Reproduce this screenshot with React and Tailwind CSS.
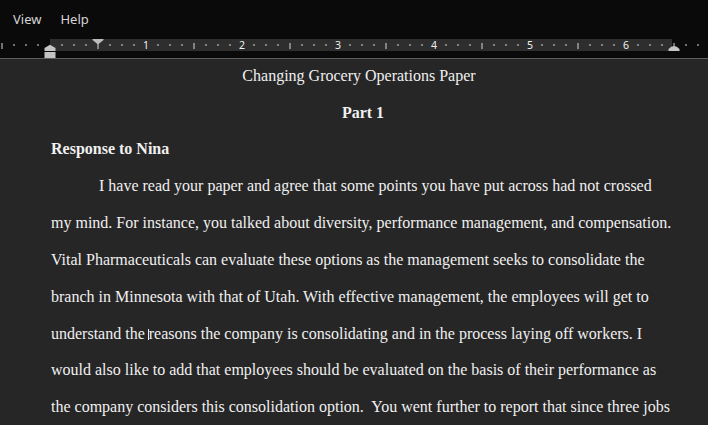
import React from 'react';

const lines = [
  'my mind. For instance, you talked about diversity, performance management, and compensation.',
  'Vital Pharmaceuticals can evaluate these options as the management seeks to consolidate the',
  'branch in Minnesota with that of Utah. With effective management, the employees will get to',
];

function Ruler() {
  const ticks = [];
  for (let k = -4; k <= 54; k++) {
    const x = 50 + k * 12;
    if (k === 0 || x > 706) continue;
    if (k % 8 === 0) {
      ticks.push(
        <text key={k} x={x} y={9.5} fill="#f0f0f0" fontSize="10.5" fontFamily="'Noto Sans', sans-serif" textAnchor="middle">
          {k / 8}
        </text>
      );
    } else if (Math.abs(k % 8) === 4) {
      ticks.push(<rect key={k} x={x - 0.5} y={4} width={1} height={6} fill="#d8d8d8" />);
    } else {
      ticks.push(<rect key={k} x={x - 0.5} y={5} width={1} height={2} fill="#d8d8d8" />);
    }
  }
  return (
    <svg width="708" height="19" viewBox="0 0 708 19" className="block">
      <rect x="0" y="0" width="708" height="19" fill="#0a0a0a" />
      <rect x="50" y="0" width="622" height="12" fill="#2e2e2e" />
      {ticks}
      {/* first line indent */}
      <path d="M92.5 -2 H103.5 V1 L98 5.5 L92.5 1 Z" fill="#bdbdbd" />
      {/* hanging indent + left indent */}
      <path d="M50 5.8 L44.5 9 V12 H55.5 V9 Z" fill="#c4c4c4" />
      <rect x="44.5" y="13" width="11" height="6" fill="#c4c4c4" />
      {/* right indent */}
      <path d="M668.5 12 V10 Q674 4 679.5 10 V12 Z" fill="#c4c4c4" />
    </svg>
  );
}

export default function App() {
  return (
    <div className="w-[708px] h-[425px] overflow-hidden bg-[#262626]">
      {/* Menu */}
      <div className="h-[39px] bg-[#0a0a0a] flex items-center pl-[13px] gap-[19px] text-[13px] text-[#d6d6d6] font-['Noto_Sans',sans-serif] pt-[1px]">
        <span>View</span>
        <span>Help</span>
      </div>

      {/* Ruler */}
      <Ruler />
      <div className="h-px bg-[#5e5e5e]" />

      {/* Document */}
      <div className="pl-[51px] w-[675px] -mt-[1px] font-['Liberation_Serif',serif] text-[16px] leading-[36.8px] text-[#f0f0f0] whitespace-nowrap">
        <div className="text-center pr-[8px]">Changing Grocery Operations Paper</div>
        <div className="text-center font-bold">Part 1</div>
        <div className="font-bold -mt-[1px] mb-[1px]">Response to Nina</div>
        <div className="pl-[48px]">I have read your paper and agree that some points you have put across had not crossed</div>
        {lines.map((l, i) => (
          <div key={i}>{l}</div>
        ))}
        <div>
          understand the <span className="inline-block w-px h-[11px] bg-[#ececec] align-[-1px] -mx-[0.5px]" />reasons the company is consolidating and in the process laying off workers. I
        </div>
        <div>would also like to add that employees should be evaluated on the basis of their performance as</div>
        <div className="whitespace-pre">the company considers this consolidation option.  You went further to report that since three jobs</div>
      </div>
    </div>
  );
}
